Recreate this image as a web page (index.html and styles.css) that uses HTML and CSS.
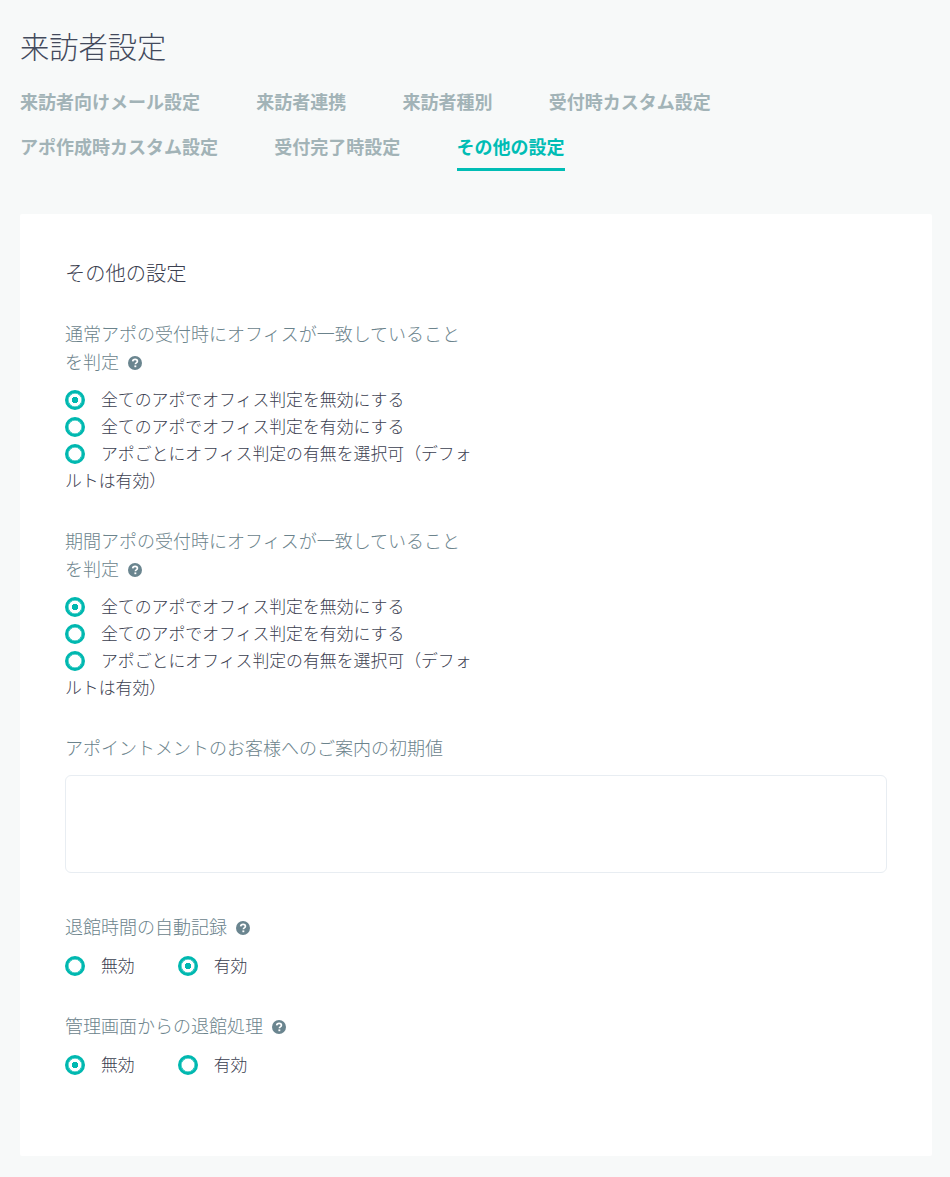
FILE: index.html
```html
<!DOCTYPE html>
<html lang="ja">
<head>
<meta charset="utf-8">
<title>来訪者設定</title>
<link rel="stylesheet" href="styles.css">
</head>
<body>
<main class="page">
  <h1 class="title">来訪者設定</h1>
  <nav class="tabs">
    <a class="tab">来訪者向けメール設定</a>
    <a class="tab">来訪者連携</a>
    <a class="tab">来訪者種別</a>
    <a class="tab">受付時カスタム設定</a>
    <a class="tab">アポ作成時カスタム設定</a>
    <a class="tab">受付完了時設定</a>
    <a class="tab active">その他の設定</a>
  </nav>
  <section class="card">
    <h2 class="card-title">その他の設定</h2>

    <div class="field narrow">
      <div class="label">通常アポの受付時にオフィスが一致していることを判定<svg class="help" viewBox="0 0 14 14"><circle cx="7" cy="7" r="7" fill="#6a858f"/><path d="M4.7 5.4c.1-1.4 1-2.1 2.4-2.1 1.3 0 2.3.8 2.3 1.9 0 1.7-2 1.6-2 3" fill="none" stroke="#fff" stroke-width="1.7"/><rect x="6.4" y="9.4" width="1.9" height="1.8" fill="#fff"/></svg></div>
      <div class="options">
        <label class="radio"><span class="dot on"></span>全てのアポでオフィス判定を無効にする</label>
        <label class="radio"><span class="dot"></span>全てのアポでオフィス判定を有効にする</label>
        <label class="radio"><span class="dot"></span>アポごとにオフィス判定の有無を選択可（デフォルトは有効）</label>
      </div>
    </div>

    <div class="field narrow">
      <div class="label">期間アポの受付時にオフィスが一致していることを判定<svg class="help" viewBox="0 0 14 14"><circle cx="7" cy="7" r="7" fill="#6a858f"/><path d="M4.7 5.4c.1-1.4 1-2.1 2.4-2.1 1.3 0 2.3.8 2.3 1.9 0 1.7-2 1.6-2 3" fill="none" stroke="#fff" stroke-width="1.7"/><rect x="6.4" y="9.4" width="1.9" height="1.8" fill="#fff"/></svg></div>
      <div class="options">
        <label class="radio"><span class="dot on"></span>全てのアポでオフィス判定を無効にする</label>
        <label class="radio"><span class="dot"></span>全てのアポでオフィス判定を有効にする</label>
        <label class="radio"><span class="dot"></span>アポごとにオフィス判定の有無を選択可（デフォルトは有効）</label>
      </div>
    </div>

    <div class="field wide">
      <div class="label">アポイントメントのお客様へのご案内の初期値</div>
      <div class="textarea"></div>
    </div>

    <div class="field short">
      <div class="label">退館時間の自動記録<svg class="help" viewBox="0 0 14 14"><circle cx="7" cy="7" r="7" fill="#6a858f"/><path d="M4.7 5.4c.1-1.4 1-2.1 2.4-2.1 1.3 0 2.3.8 2.3 1.9 0 1.7-2 1.6-2 3" fill="none" stroke="#fff" stroke-width="1.7"/><rect x="6.4" y="9.4" width="1.9" height="1.8" fill="#fff"/></svg></div>
      <div class="inline-options">
        <label class="radio"><span class="dot"></span>無効</label>
        <label class="radio"><span class="dot on"></span>有効</label>
      </div>
    </div>

    <div class="field short">
      <div class="label">管理画面からの退館処理<svg class="help" viewBox="0 0 14 14"><circle cx="7" cy="7" r="7" fill="#6a858f"/><path d="M4.7 5.4c.1-1.4 1-2.1 2.4-2.1 1.3 0 2.3.8 2.3 1.9 0 1.7-2 1.6-2 3" fill="none" stroke="#fff" stroke-width="1.7"/><rect x="6.4" y="9.4" width="1.9" height="1.8" fill="#fff"/></svg></div>
      <div class="inline-options">
        <label class="radio"><span class="dot on"></span>無効</label>
        <label class="radio"><span class="dot"></span>有効</label>
      </div>
    </div>
  </section>
</main>
</body>
</html>
```

FILE: styles.css
```css
* { box-sizing: border-box; }
html, body { margin: 0; padding: 0; }
body {
  background: #f7f9f9;
  font-family: "Noto Sans CJK JP", "Noto Sans", sans-serif;
  font-weight: 300;
  color: #3b4050;
}
.page { padding: 21px 18px 21px 20px; }
.title {
  margin: 0;
  font-size: 29.25px;
  line-height: 48px;
  font-weight: 300;
  color: #434a5c;
}
.tabs {
  display: flex;
  flex-wrap: wrap;
  column-gap: 56.25px;
  margin-top: 12px;
  width: 720px;
}
.tab {
  display: block;
  height: 45px;
  padding-top: 7px;
  font-size: 18px;
  line-height: 26px;
  font-weight: 700;
  color: #a2b3b7;
  white-space: nowrap;
}
.tab.active {
  height: 45px;
  color: #00bdb5;
  border-bottom: 3px solid #00bdb5;
}
.card {
  margin-top: 43px;
  background: #fff;
  height: 942px;
  padding: 44px 45px 0 45px;
  border-radius: 2px;
}
.card-title {
  margin: 0 0 31px;
  font-size: 20.25px;
  line-height: 30px;
  font-weight: 300;
  color: #3b4050;
}
.field { margin-bottom: 33px; }
.field.narrow { width: 408px; }
.field.wide { margin-bottom: 39px; }
.field.short { margin-bottom: 33px; }
.label {
  font-size: 18px;
  line-height: 28px;
  color: #6b838c;
}
.help {
  width: 14px;
  height: 14px;
  margin-left: 9px;
  vertical-align: -1px;
}
.options { margin-top: 10px; }
.radio {
  font-size: 16.875px;
  line-height: 27px;
  color: #3b4050;
}
.options .radio { display: block; }
.dot {
  display: inline-block;
  width: 20px;
  height: 20px;
  margin-right: 16px;
  border: 3px solid #00b8b0;
  border-radius: 50%;
  vertical-align: -4px;
  background: #fff;
  box-shadow: inset 0 0 0 .5px #00b8b0;
}
.dot.on {
  background: radial-gradient(circle, #00b8b0 0 3px, #fff 3.5px);
}
.textarea {
  margin-top: 14px;
  height: 98px;
  border: 1px solid #e8edf2;
  border-radius: 6px;
  background: #fff;
}
.inline-options {
  display: flex;
  column-gap: 43px;
  margin-top: 11px;
}
```
